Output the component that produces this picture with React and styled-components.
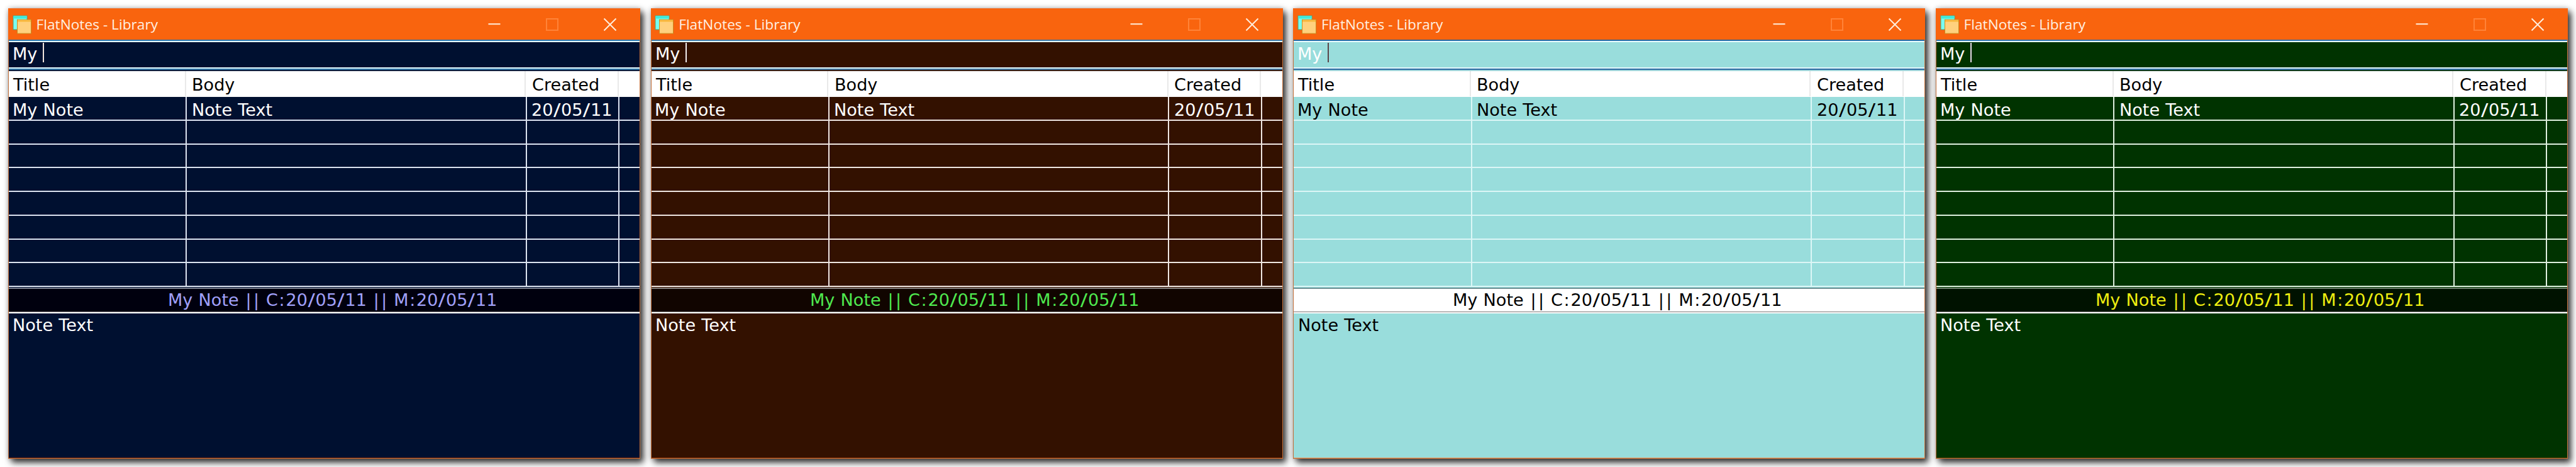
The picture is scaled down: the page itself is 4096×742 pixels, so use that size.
import React from "react";
import styled, { createGlobalStyle, ThemeProvider } from "styled-components";

const GlobalStyle = createGlobalStyle`
  body { margin: 0; background: #fff; overflow: hidden; }
  * { box-sizing: border-box; }
`;

const Desktop = styled.main`
  width: 4096px;
  height: 742px;
  padding: 13px 0 0 13px;
  display: flex;
  align-items: flex-start;
  gap: 16.7px;
  font-family: "DejaVu Sans", Verdana, sans-serif;
  font-size: 26px;
  white-space: pre;
`;

const Window = styled.section`
  flex: none;
  width: 1005px;
  height: 716px;
  display: flex;
  flex-direction: column;
  box-shadow: 5px 6px 10px rgba(0, 0, 0, 0.8), 0 0 8px rgba(0, 0, 0, 0.22);
`;

const TitleBar = styled.header`
  flex: none;
  height: 50px;
  padding: 0 2.5px 0 6.5px;
  display: flex;
  align-items: center;
  background: #f9640e;
  border-top: 1px solid #ee7434;
`;

const AppIcon = styled.svg`
  width: 30px;
  height: 30px;
  margin-right: 8px;
`;

const Caption = styled.h1`
  margin: 0;
  flex: 1;
  font: 400 22.7px/48px "Open Sans", "Segoe UI", sans-serif;
  color: #fff0e2;
`;

const CaptionButton = styled.span`
  width: 91.9px;
  display: flex;
  justify-content: center;
`;

const Glyph = styled.svg`
  width: 22px;
  height: 22px;
  fill: none;
  stroke: ${(p) => (p.$disabled ? "#ff8338" : "#ffeedd")};
  stroke-width: 2;
`;

const Client = styled.div`
  flex: 1;
  display: flex;
  flex-direction: column;
  border: solid #c4703a;
  border-width: 0 1px 1px;
  background: ${(p) => p.theme.back};
`;

const Rule = styled.div`
  flex: none;
  height: ${(p) => p.$h}px;
  background: ${(p) => p.$color};
`;

/* The interface face is drawn slightly wider than its normal proportions. */
const WideText = styled.span`
  display: inline-block;
  transform: scaleX(1.042);
  transform-origin: left center;
  word-spacing: 0.02em;
`;

/* Slashes, colons and bars share one wide advance. */
const Mark = styled.span`
  display: inline-block;
  width: 0.462em;
  text-align: center;
  transform: scaleX(${(p) => (p.$slash ? 1.25 : 1)});
`;

const Search = styled.div`
  flex: none;
  height: 40px;
  padding-left: 5.9px;
  display: flex;
  line-height: 38px;
  color: #fff;
`;

const Caret = styled.span`
  width: 2px;
  height: 31px;
  margin: 1px 0 0 1.4px;
  background: ${(p) => p.theme.caret};
`;

const TableHead = styled.div`
  flex: none;
  height: 41px;
  display: grid;
  grid-template-columns: 281.5px 540.5px 147.8px 1fr;
  background: #fff;
  color: #000;
  line-height: 45px;
`;

const HeadCell = styled.div`
  height: 40px;
  padding-left: ${(p) => p.$pad}px;
  border-right: ${(p) => (p.$last ? "0" : "2px solid #e9e9e9")};
`;

const Row = styled.div`
  flex: none;
  height: ${(p) => (p.$first ? 38 : 37.72)}px;
  display: grid;
  grid-template-columns: 283.3px 540.5px 147.6px 1fr;
  border-bottom: 2px solid ${(p) => p.theme.grid};
  color: ${(p) => p.theme.text};
  line-height: 43px;
`;

const Cell = styled.div`
  height: 36px;
  padding-left: ${(p) => p.$pad}px;
  border-right: ${(p) => (p.$last ? "0" : `2px solid ${p.theme.grid}`)};
`;

const Status = styled.div`
  flex: none;
  height: 36px;
  padding-left: 252.8px;
  background: ${(p) => p.theme.statusBack};
  color: ${(p) => p.theme.status};
  line-height: 37px;
`;

const Editor = styled.div`
  flex: 1;
  padding: 0 0 0 6.2px;
  color: ${(p) => p.theme.text};
  line-height: 39px;
  border-bottom: 1px solid ${(p) => p.theme.edge};
`;

const themes = [
  { back: "#001030", text: "#fff", grid: "#dce3f0", caret: "#f2e4dc", statusBack: "#00000e", status: "#a0a0fa", blue: "#2f78ac", mid: "#101e3c", gray: "#777d8d", edge: "#7a2c10" },
  { back: "#331100", text: "#fff", grid: "#efe6e2", caret: "#f2eeee", statusBack: "#110500", status: "#4fe84f", blue: "#3f78a4", mid: "#3c2014", gray: "#85807d", edge: "#8a3408" },
  { back: "#99dddc", text: "#000", grid: "#dcf6f6", caret: "#5a4548", statusBack: "#fff", status: "#000", blue: "#2868a0", mid: "#a4d8dc", gray: "#6f9094", edge: "#d8a070" },
  { back: "#003300", text: "#fff", grid: "#dff0df", caret: "#e6d8e8", statusBack: "#001200", status: "#eeee10", blue: "#3474ac", mid: "#123c1c", gray: "#6c806c", edge: "#5c4408" },
];

const blankRows = [1, 2, 3, 4, 5, 6, 7];

/* Sets marks on their own advance and leaves other runs as they are. */
function Spaced({ children }) {
  return (
    <WideText>
      {children.split(/([/:|])/).map((run, i) =>
        i % 2 ? <Mark key={i} $slash={run === "/"}>{run}</Mark> : run
      )}
    </WideText>
  );
}

function NotesWindow({ theme }) {
  return (
    <ThemeProvider theme={theme}>
      <Window>
        <TitleBar>
          <AppIcon viewBox="0 0 30 30">
            <rect x="1" y="1" width="22" height="22" fill="#78fff2" stroke="#5a9a70" />
            <rect x="1.5" y="1.5" width="21" height="4" fill="#40eadb" />
            <rect x="7.5" y="7.2" width="22" height="22" fill="#ffd17e" stroke="#c98a20" />
            <rect x="8" y="7.7" width="21" height="3" fill="#f9bb42" />
          </AppIcon>
          <Caption>FlatNotes - Library</Caption>
          <CaptionButton>
            <Glyph viewBox="0 0 22 22"><path d="M1.5 10.2h19" /></Glyph>
          </CaptionButton>
          <CaptionButton>
            <Glyph viewBox="0 0 22 22" $disabled><rect x="2" y="2" width="18" height="18" /></Glyph>
          </CaptionButton>
          <CaptionButton>
            <Glyph viewBox="0 0 22 22"><path d="M1.5 1.5l19 19M20.5 1.5l-19 19" /></Glyph>
          </CaptionButton>
        </TitleBar>
        <Client>
          <Rule $h={2} $color={theme.blue} />
          <Rule $h={2} $color="#e8fcff" />
          <Search><WideText>{"My "}</WideText><Caret /></Search>
          <Rule $h={2} $color="#e2f8fc" />
          <Rule $h={2} $color={theme.blue} />
          <Rule $h={2} $color={theme.mid} />
          <TableHead>
            <HeadCell $pad={7}><WideText>Title</WideText></HeadCell>
            <HeadCell $pad={9.4}><WideText>Body</WideText></HeadCell>
            <HeadCell $pad={9.5}><WideText>Created</WideText></HeadCell>
            <HeadCell $last />
          </TableHead>
          <Row $first>
            <Cell $pad={5.7}><WideText>My Note</WideText></Cell>
            <Cell $pad={7.4}><WideText>Note Text</WideText></Cell>
            <Cell $pad={7.5}><Spaced>20/05/11</Spaced></Cell>
            <Cell $last />
          </Row>
          {blankRows.map((n) => (
            <Row key={n}>
              <Cell />
              <Cell />
              <Cell />
              <Cell $last />
            </Row>
          ))}
          <Rule $h={1} $color={theme.back} />
          <Rule $h={2} $color={theme.gray} />
          <Status><Spaced>My Note || C:20/05/11 || M:20/05/11</Spaced></Status>
          <Rule $h={1} $color="#7c7878" />
          <Rule $h={2} $color="#fff" />
          <Editor><WideText>Note Text</WideText></Editor>
        </Client>
      </Window>
    </ThemeProvider>
  );
}

export default function App() {
  return (
    <>
      <GlobalStyle />
      <Desktop>
        {themes.map((theme) => (
          <NotesWindow key={theme.back} theme={theme} />
        ))}
      </Desktop>
    </>
  );
}
